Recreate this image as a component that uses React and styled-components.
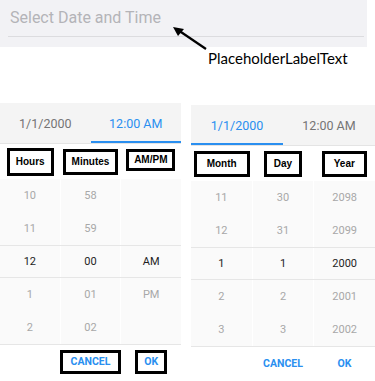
import React from "react";
import styled, { createGlobalStyle } from "styled-components";

const GlobalStyle = createGlobalStyle`
  body {
    margin: 0;
    background: #ffffff;
    font-family: Roboto, "Liberation Sans", sans-serif;
  }
`;

const Page = styled.div`
  position: relative;
  width: 375px;
  height: 381px;
  overflow: hidden;
`;

const Field = styled.div`
  width: 367px;
  height: 47px;
  background: #f2f2f5;
  padding: 8px 0 0 8px;
  box-sizing: border-box;
`;

const FieldInput = styled.div`
  width: 356px;
  height: 29px;
  border-bottom: 1px solid #dcdcdf;
  box-sizing: border-box;
  padding-left: 2px;
  font-size: 16px;
  line-height: 20px;
  color: #b4b4b8;
`;

const Note = styled.div`
  height: 56px;
  padding-left: 208px;
  padding-top: 2px;
  box-sizing: border-box;
  font-family: Lato, "Open Sans", sans-serif;
  font-size: 15px;
  color: #000;
`;

const Arrow = styled.svg`
  position: absolute;
  left: 168px;
  top: 20px;
`;

const Pickers = styled.div`
  display: flex;
  gap: 10px;
  align-items: flex-start;
`;

const Panel = styled.div`
  width: ${(p) => p.$w}px;
  margin-top: ${(p) => p.$top || 0}px;
  display: flex;
  flex-direction: column;
`;

const Tabs = styled.div`
  display: grid;
  grid-template-columns: 1fr 1fr;
  background: #f4f4f4;
  border-bottom: 1px solid #e4e4e4;
`;

const Tab = styled.div`
  height: 40px;
  display: flex;
  align-items: center;
  justify-content: center;
  font-size: 12.5px;
  color: ${(p) => (p.$active ? "#2a8ff0" : "#757575")};
  box-shadow: ${(p) => (p.$active ? "inset 0 -2px 0 #2a8ff0" : "none")};
`;

const Labels = styled.div`
  display: grid;
  grid-template-columns: repeat(3, 1fr);
  height: 35px;
  align-items: center;
  justify-items: center;
`;

const LabelBox = styled.div`
  border: 3px solid #000;
  padding: ${(p) => p.$pad};
  font-family: "Liberation Sans", Arial, sans-serif;
  font-weight: 700;
  font-size: 10px;
  line-height: 12px;
  color: #000;
  margin-top: ${(p) => p.$mt || 0}px;
`;

const Wheel = styled.div`
  display: flex;
  flex-direction: column;
  border-bottom: 1px solid #e6e6e6;
`;

const Row = styled.div`
  display: grid;
  grid-template-columns: repeat(3, 1fr);
  column-gap: 1px;
  height: 33px;
  box-sizing: border-box;
  background: #ffffff;
  border-top: ${(p) => (p.$sel ? "1px solid #e6e6e6" : "none")};
  border-bottom: ${(p) => (p.$sel ? "1px solid #e6e6e6" : "none")};
`;

const Cell = styled.div`
  background: #fafafa;
  display: flex;
  align-items: center;
  justify-content: center;
  font-size: 11px;
  color: ${(p) => (p.$sel ? "#1e1e1e" : "#a8a8a8")};
`;

const Actions = styled.div`
  display: grid;
  grid-template-columns: repeat(3, 1fr);
  height: 34px;
  align-items: center;
  justify-items: center;
`;

const Button = styled.div`
  grid-column: ${(p) => p.$col};
  border: ${(p) => (p.$boxed ? "3px solid #000" : "3px solid transparent")};
  padding: ${(p) => p.$pad};
  font-size: 10.5px;
  font-weight: 700;
  line-height: 12px;
  color: #2a8ff0;
`;

const timeRows = [
  ["10", "58", ""],
  ["11", "59", ""],
  ["12", "00", "AM"],
  ["1", "01", "PM"],
  ["2", "02", ""],
];

const dateRows = [
  ["11", "30", "2098"],
  ["12", "31", "2099"],
  ["1", "1", "2000"],
  ["2", "2", "2001"],
  ["3", "3", "2002"],
];

const Picker = ({ w, top, activeTab, labels, rows, boxed }) => (
  <Panel $w={w} $top={top}>
    <Tabs>
      <Tab $active={activeTab === 0}>1/1/2000</Tab>
      <Tab $active={activeTab === 1}>12:00 AM</Tab>
    </Tabs>
    <Labels>
      {labels.map((l) => (
        <LabelBox key={l.text} $pad={l.pad} $mt={l.mt}>
          {l.text}
        </LabelBox>
      ))}
    </Labels>
    <Wheel>
      {rows.map((r, i) => (
        <Row key={i} $sel={i === 2}>
          {r.map((v, j) => (
            <Cell key={j} $sel={i === 2}>
              {v}
            </Cell>
          ))}
        </Row>
      ))}
    </Wheel>
    <Actions>
      <Button $col={2} $boxed={boxed} $pad="3px 8px">CANCEL</Button>
      <Button $col={3} $boxed={boxed} $pad="3px 6px">OK</Button>
    </Actions>
  </Panel>
);

export default function App() {
  return (
    <Page>
      <GlobalStyle />
      <Field>
        <FieldInput>Select Date and Time</FieldInput>
      </Field>
      <Note>PlaceholderLabelText</Note>
      <Arrow width="44" height="34" viewBox="0 0 44 34">
        <line x1="38" y1="29" x2="10" y2="10" stroke="#000" strokeWidth="2.2" />
        <polygon points="5,7 16,9 10,16" fill="#000" />
      </Arrow>
      <Pickers>
        <Picker
          w={181}
          top={0}
          activeTab={1}
          boxed
          rows={timeRows}
          labels={[
            { text: "Hours", pad: "5px 6px" },
            { text: "Minutes", pad: "4px 6px" },
            { text: "AM/PM", pad: "2px 5px", mt: -4 },
          ]}
        />
        <Picker
          w={184}
          top={2}
          activeTab={0}
          rows={dateRows}
          labels={[
            { text: "Month", pad: "4px 10px" },
            { text: "Day", pad: "4px 7px" },
            { text: "Year", pad: "4px 9px" },
          ]}
        />
      </Pickers>
    </Page>
  );
}
